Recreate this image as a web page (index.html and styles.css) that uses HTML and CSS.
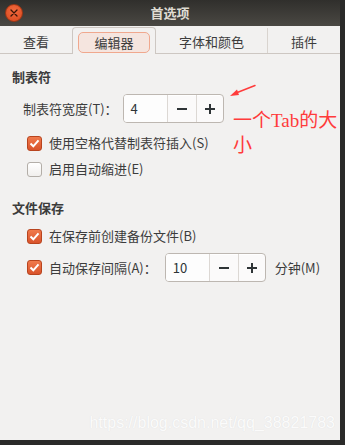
FILE: index.html
```html
<!DOCTYPE html>
<html lang="zh-CN">
<head>
<meta charset="utf-8">
<title>首选项</title>
<link rel="stylesheet" href="styles.css">
</head>
<body>
<div class="window">
  <div class="titlebar">
    <div class="close"><svg width="8" height="8" viewBox="0 0 8 8"><path d="M1 1L7 7M7 1L1 7" stroke="#3a1508" stroke-width="1.3" stroke-linecap="round"/></svg></div>
    <div class="title">首选项</div>
  </div>
  <div class="tabs">
    <div class="tab t1">查看</div>
    <div class="tab t2 active"><span class="pill">编辑器</span></div>
    <div class="tab t3">字体和颜色</div>
    <div class="tab t4">插件</div>
  </div>
  <div class="content">
    <div class="section-title">制表符</div>
    <div class="row spin-row indent1">
      <span class="label">制表符宽度(T)：</span>
      <div class="spin">
        <div class="entry">4</div>
        <div class="btn"><svg width="12" height="12" viewBox="0 0 12 12"><path d="M1 6H11" stroke="#2e3436" stroke-width="2"/></svg></div>
        <div class="btn"><svg width="12" height="12" viewBox="0 0 12 12"><path d="M1 6H11M6 1V11" stroke="#2e3436" stroke-width="2"/></svg></div>
      </div>
    </div>
    <div class="row check-row first">
      <span class="check on"><svg width="11" height="11" viewBox="0 0 11 11"><path d="M1.5 5.5L4.3 8.3L9.5 2.3" fill="none" stroke="#fff" stroke-width="2"/></svg></span>
      <span class="label">使用空格代替制表符插入(S)</span>
    </div>
    <div class="row check-row">
      <span class="check"></span>
      <span class="label">启用自动缩进(E)</span>
    </div>

    <div class="section-title second">文件保存</div>
    <div class="row check-row third">
      <span class="check on"><svg width="11" height="11" viewBox="0 0 11 11"><path d="M1.5 5.5L4.3 8.3L9.5 2.3" fill="none" stroke="#fff" stroke-width="2"/></svg></span>
      <span class="label">在保存前创建备份文件(B)</span>
    </div>
    <div class="row check-row spin-line">
      <span class="check on"><svg width="11" height="11" viewBox="0 0 11 11"><path d="M1.5 5.5L4.3 8.3L9.5 2.3" fill="none" stroke="#fff" stroke-width="2"/></svg></span>
      <span class="label">自动保存间隔(A)：</span>
      <div class="spin">
        <div class="entry">10</div>
        <div class="btn"><svg width="12" height="12" viewBox="0 0 12 12"><path d="M1 6H11" stroke="#2e3436" stroke-width="2"/></svg></div>
        <div class="btn"><svg width="12" height="12" viewBox="0 0 12 12"><path d="M1 6H11M6 1V11" stroke="#2e3436" stroke-width="2"/></svg></div>
      </div>
      <span class="label unit">分钟(M)</span>
    </div>
  </div>

  <div class="annotation">
    <svg class="arrow" width="30" height="16" viewBox="0 0 30 16"><path d="M27 1.5L8 9" stroke="#ff3b3b" stroke-width="1.5" stroke-linecap="round"/><path d="M2 12L9 5.5L11 11Z" fill="#ff3b3b"/></svg>
    <div class="note">一个Tab的大<br>小</div>
  </div>
  <div class="watermark">https://blog.csdn.net/qq_38821783</div>
</div>
</body>
</html>
```
FILE: styles.css
```css
* { box-sizing: border-box; }
html, body { margin: 0; padding: 0; }
body {
  width: 345px;
  height: 445px;
  background: #2a2a29;
  font-family: "Noto Sans CJK SC", "Noto Sans", sans-serif;
  font-size: 13px;
  color: #3c3c3c;
  overflow: hidden;
}
.window {
  position: relative;
  width: 340px;
  height: 440px;
  background: #f2f1f0;
  overflow: hidden;
}
.titlebar {
  height: 26px;
  background: linear-gradient(#302f2c, #4a4843);
  display: flex;
  align-items: center;
  position: relative;
}
.close {
  width: 18px;
  height: 18px;
  margin-left: 5px;
  border-radius: 50%;
  background: radial-gradient(circle at 50% 35%, #f26a3e, #d8481e);
  border: 1px solid #9e3614;
  display: flex;
  align-items: center;
  justify-content: center;
}
.title {
  position: absolute;
  left: 0;
  right: 0;
  text-align: center;
  color: #dfdbd2;
  font-weight: bold;
  font-size: 13px;
  line-height: 26px;
}
.tabs {
  height: 28px;
  display: flex;
  border-bottom: 1px solid #cdc7c2;
  background: #f2f1f0;
}
.tab {
  display: flex;
  align-items: center;
  justify-content: center;
  padding-top: 4px;
  font-size: 13px;
  color: #3c3c3c;
}
.t1 { width: 72px; }
.t2 { width: 84px; }
.t3 { width: 112px; border-right: 1px solid #d9d4cf; margin: 2px 0 0 0; padding-top: 2px; }
.t4 { flex: 1; }
.tab.active {
  margin-top: 1px;
  margin-bottom: -1px;
  padding-top: 2px;
  border: 1px solid #cdc7c2;
  border-bottom: none;
  border-radius: 4px 4px 0 0;
  background: #f2f1f0;
}
.pill {
  width: 72px;
  height: 21px;
  display: flex;
  align-items: center;
  justify-content: center;
  border: 1px solid #f0a88e;
  border-radius: 5px;
  background: #f5e5df;
}
.content {
  padding: 13px 0 0 12px;
  display: flex;
  flex-direction: column;
}
.section-title {
  height: 20px;
  line-height: 20px;
  font-weight: bold;
  font-size: 13px;
}
.section-title.second { margin-top: 16px; }
.row {
  display: flex;
  align-items: center;
}
.spin-row {
  height: 29px;
  margin-top: 7px;
  padding-left: 11px;
}
.label { line-height: 18px; white-space: nowrap; }
.spin-row .label { margin-right: 5px; }
.spin {
  width: 101px;
  height: 29px;
  display: flex;
  border: 1px solid #bdb7b1;
  border-radius: 4px;
  background: #fbfafa;
  box-shadow: inset 0 1px 0 #fff;
}
.entry {
  width: 43px;
  padding-left: 7px;
  display: flex;
  align-items: center;
  font-size: 13px;
  color: #2e3436;
  background: #fdfdfd;
  border-radius: 3px 0 0 3px;
}
.btn {
  width: 29px;
  display: flex;
  align-items: center;
  justify-content: center;
  border-left: 1px solid #dcd8d4;
}
.btn + .btn { flex: 1; }
.check-row {
  height: 26px;
  padding-left: 15px;
}
.check-row.first { margin-top: 7px; }
.check-row.third { margin-top: 5px; }
.check-row.spin-line { margin-top: 4px; height: 29px; }
.check {
  width: 15px;
  height: 15px;
  margin-right: 7px;
  border-radius: 3px;
  border: 1px solid #b3aea8;
  background: linear-gradient(#ffffff, #f1efed);
  display: flex;
  align-items: center;
  justify-content: center;
  flex: none;
}
.check.on {
  border-color: #b8441e;
  background: linear-gradient(#f07a4c, #d9532b);
}
.spin-line .label { margin-right: 8px; }
.spin-line .unit { margin-left: 9px; }
.annotation {
  position: absolute;
  left: 226px;
  top: 84px;
}
.arrow { display: block; margin-left: 2px; }
.note {
  margin-top: 8px;
  margin-left: 7px;
  font-family: "Liberation Serif", "Noto Sans CJK SC", serif;
  font-size: 19px;
  line-height: 25px;
  color: #ff3b3b;
  white-space: nowrap;
}
.watermark {
  position: absolute;
  right: 5px;
  top: 414px;
  font-family: "Liberation Sans", Arial, sans-serif;
  font-size: 16px;
  color: #fbfbfb;
  text-shadow: 0 0 1px #dcdcdc;
  white-space: nowrap;
}
```
